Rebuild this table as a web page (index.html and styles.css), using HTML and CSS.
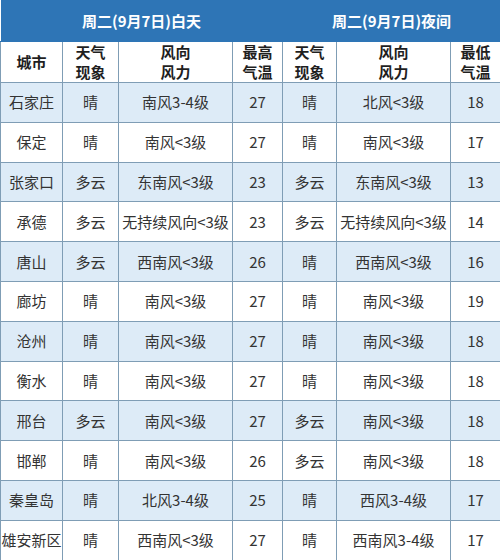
FILE: index.html
```html
<!DOCTYPE html>
<html lang="zh">
<head>
<meta charset="utf-8">
<link rel="stylesheet" href="styles.css">
</head>
<body>
<table class="wx">
  <colgroup>
    <col class="c1"><col class="c2"><col class="c3"><col class="c4"><col class="c5"><col class="c6"><col class="c7">
  </colgroup>
  <thead>
    <tr class="band">
      <th colspan="4">周二(9月7日)白天</th>
      <th colspan="3">周二(9月7日)夜间</th>
    </tr>
    <tr class="heads">
      <th>城市</th>
      <th>天气<br>现象</th>
      <th>风向<br>风力</th>
      <th>最高<br>气温</th>
      <th>天气<br>现象</th>
      <th>风向<br>风力</th>
      <th>最低<br>气温</th>
    </tr>
  </thead>
  <tbody>
    <tr class="alt"><td>石家庄</td><td>晴</td><td>南风3-4级</td><td>27</td><td>晴</td><td>北风&lt;3级</td><td>18</td></tr>
    <tr><td>保定</td><td>晴</td><td>南风&lt;3级</td><td>27</td><td>晴</td><td>南风&lt;3级</td><td>17</td></tr>
    <tr class="alt"><td>张家口</td><td>多云</td><td>东南风&lt;3级</td><td>23</td><td>多云</td><td>东南风&lt;3级</td><td>13</td></tr>
    <tr><td>承德</td><td>多云</td><td>无持续风向&lt;3级</td><td>23</td><td>多云</td><td>无持续风向&lt;3级</td><td>14</td></tr>
    <tr class="alt"><td>唐山</td><td>多云</td><td>西南风&lt;3级</td><td>26</td><td>晴</td><td>西南风&lt;3级</td><td>16</td></tr>
    <tr><td>廊坊</td><td>晴</td><td>南风&lt;3级</td><td>27</td><td>晴</td><td>南风&lt;3级</td><td>19</td></tr>
    <tr class="alt"><td>沧州</td><td>晴</td><td>南风&lt;3级</td><td>27</td><td>晴</td><td>南风&lt;3级</td><td>18</td></tr>
    <tr><td>衡水</td><td>晴</td><td>南风&lt;3级</td><td>27</td><td>晴</td><td>南风&lt;3级</td><td>18</td></tr>
    <tr class="alt"><td>邢台</td><td>多云</td><td>南风&lt;3级</td><td>27</td><td>多云</td><td>南风&lt;3级</td><td>18</td></tr>
    <tr><td>邯郸</td><td>晴</td><td>南风&lt;3级</td><td>26</td><td>多云</td><td>南风&lt;3级</td><td>18</td></tr>
    <tr class="alt"><td>秦皇岛</td><td>晴</td><td>北风3-4级</td><td>25</td><td>晴</td><td>西风3-4级</td><td>17</td></tr>
    <tr><td>雄安新区</td><td>晴</td><td>西南风&lt;3级</td><td>27</td><td>晴</td><td>西南风3-4级</td><td>17</td></tr>
  </tbody>
</table>
</body>
</html>
```
FILE: styles.css
```css
html, body {
  margin: 0;
  padding: 0;
  background: #ffffff;
}
body {
  font-family: "Noto Sans CJK SC", "Noto Sans", sans-serif;
  color: #333333;
  width: 500px;
  height: 560px;
  overflow: hidden;
}
.wx {
  width: 500px;
  border-collapse: collapse;
  table-layout: fixed;
}
.c1 { width: 62px; }
.c2 { width: 56px; }
.c3 { width: 114px; }
.c4 { width: 50px; }
.c5 { width: 54px; }
.c6 { width: 114px; }
.c7 { width: 50px; }
.wx th, .wx td {
  padding: 0;
  text-align: center;
  vertical-align: middle;
  border: 1px solid #7f9db5;
  font-size: 15px;
  white-space: nowrap;
  overflow: hidden;
}
.band th {
  background: #2e75b6;
  color: #ffffff;
  height: 41px;
  font-weight: bold;
  font-size: 15px;
  border: none;
  border-bottom: 1px solid #2e75b6;
}
.heads th {
  height: 40px;
  font-weight: bold;
  color: #1f1f1f;
  line-height: 20px;
  background: #ffffff;
}
.wx td {
  height: 38.8px;
  line-height: 20px;
}
.alt td {
  background: #ddebf7;
}
```
